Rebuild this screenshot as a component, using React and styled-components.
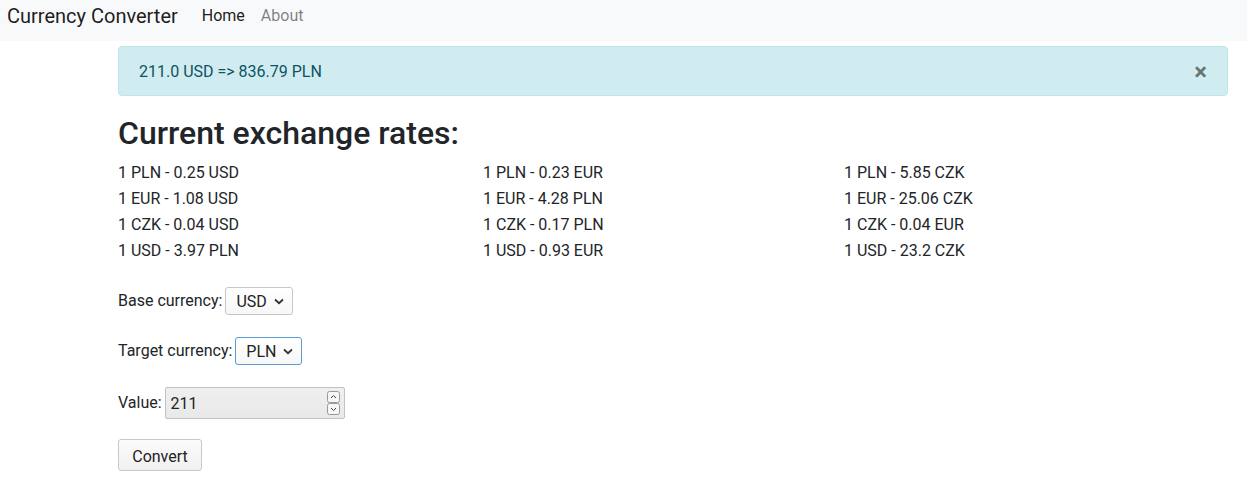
import React, { useState } from "react";
import styled, { createGlobalStyle } from "styled-components";

const GlobalStyle = createGlobalStyle`
  * { box-sizing: border-box; }
  body {
    margin: 0;
    background: #fff;
    color: #212529;
    font-family: Roboto, "Noto Sans", "Liberation Sans", sans-serif;
    font-size: 16px;
    line-height: 1.5;
  }
`;

const Navbar = styled.nav`
  height: 41px;
  background: #f8f9fa;
  display: flex;
  align-items: flex-start;
  padding: 5px 0 0 7px;
`;

const Brand = styled.a`
  font-size: 20px;
  line-height: 22px;
  color: rgba(0, 0, 0, 0.9);
  margin-right: 16px;
  text-decoration: none;
`;

const NavLink = styled.a`
  font-size: 16px;
  line-height: 22px;
  padding: 0 8px;
  text-decoration: none;
  color: ${(p) => (p.$active ? "rgba(0,0,0,0.9)" : "rgba(0,0,0,0.5)")};
`;

const Main = styled.main`
  padding: 5px 19px 0 118px;
`;

const Alert = styled.div`
  display: flex;
  align-items: center;
  justify-content: space-between;
  padding: 13px 20px 11px;
  border: 1px solid #bee5eb;
  border-radius: 4px;
  background: #d1ecf1;
  color: #0c5460;
  line-height: 24px;
`;

const Close = styled.button`
  border: 0;
  background: transparent;
  padding: 0;
  margin-right: 0;
  font-family: inherit;
  font-size: 24px;
  font-weight: 700;
  line-height: 24px;
  color: #000;
  opacity: 0.5;
  text-shadow: 0 1px 0 #fff;
  cursor: pointer;
`;

const Title = styled.h2`
  margin: 18px 0 8px;
  font-size: 32px;
  font-weight: 500;
  line-height: 1.2;
`;

const Rates = styled.div`
  display: grid;
  grid-template-columns: 365px 361px 1fr;
`;

const RateColumn = styled.div`
  display: flex;
  flex-direction: column;
`;

const Rate = styled.div`
  line-height: 26px;
`;

const Form = styled.form`
  display: flex;
  flex-direction: column;
  align-items: flex-start;
  margin-top: 23px;
`;

const Row = styled.label`
  display: flex;
  align-items: center;
  gap: 3px;
  margin-bottom: ${(p) => p.$gap}px;
`;

const SelectBox = styled.div`
  display: flex;
  align-items: center;
  gap: 7px;
  height: 28px;
  padding: 0 8px 0 10px;
  border: 1px solid ${(p) => (p.$focused ? "#5b9bd5" : "#c6c6c6")};
  border-radius: 3px;
  background: linear-gradient(#ffffff, #f7f7f7);
  color: #222;
  font-size: 16px;
  line-height: 26px;
  padding-top: 1px;
`;

const NumberBox = styled.div`
  display: flex;
  align-items: center;
  width: 180px;
  height: 32px;
  padding: 0 4px 0 5px;
  border: 1px solid #c2c2c2;
  border-radius: 2px;
  background: linear-gradient(#efefef, #e9e9e9);
`;

const NumberInput = styled.input`
  flex: 1;
  min-width: 0;
  border: 0;
  outline: 0;
  background: transparent;
  font-family: inherit;
  font-size: 16px;
  color: #222;
  padding: 1px 0 0;
  -moz-appearance: textfield;
  &::-webkit-inner-spin-button,
  &::-webkit-outer-spin-button {
    -webkit-appearance: none;
    margin: 0;
  }
`;

const Button = styled.button`
  width: 84px;
  height: 32px;
  border: 1px solid #c8c8c8;
  border-radius: 3px;
  background: linear-gradient(#fbfbfb, #f1f1f1);
  font-family: inherit;
  font-size: 16px;
  color: #222;
  padding: 2px 0 0;
`;

const Chevron = () => (
  <svg width="10" height="7" viewBox="0 0 10 7">
    <path d="M1 1.5 L5 5.2 L9 1.5" fill="none" stroke="#333" strokeWidth="1.8" />
  </svg>
);

const Spinner = () => (
  <svg width="13" height="24" viewBox="0 0 13 24">
    <rect x="0.5" y="0.5" width="12" height="11" rx="2" fill="#f6f6f6" stroke="#9a9a9a" />
    <rect x="0.5" y="12.5" width="12" height="11" rx="2" fill="#f6f6f6" stroke="#9a9a9a" />
    <path d="M4 7 L6.5 4.5 L9 7" fill="none" stroke="#444" strokeWidth="1" />
    <path d="M4 17 L6.5 19.5 L9 17" fill="none" stroke="#444" strokeWidth="1" />
  </svg>
);

const rates = [
  ["1 PLN - 0.25 USD", "1 EUR - 1.08 USD", "1 CZK - 0.04 USD", "1 USD - 3.97 PLN"],
  ["1 PLN - 0.23 EUR", "1 EUR - 4.28 PLN", "1 CZK - 0.17 PLN", "1 USD - 0.93 EUR"],
  ["1 PLN - 5.85 CZK", "1 EUR - 25.06 CZK", "1 CZK - 0.04 EUR", "1 USD - 23.2 CZK"],
];

export default function App() {
  const [value, setValue] = useState("211");
  const [showAlert, setShowAlert] = useState(true);

  return (
    <>
      <GlobalStyle />
      <Navbar>
        <Brand href="#">Currency Converter</Brand>
        <NavLink href="#" $active>Home</NavLink>
        <NavLink href="#">About</NavLink>
      </Navbar>
      <Main>
        {showAlert && (
          <Alert>
            <span>211.0 USD =&gt; 836.79 PLN</span>
            <Close type="button" onClick={() => setShowAlert(false)}>×</Close>
          </Alert>
        )}
        <Title>Current exchange rates:</Title>
        <Rates>
          {rates.map((col, i) => (
            <RateColumn key={i}>
              {col.map((r) => (
                <Rate key={r}>{r}</Rate>
              ))}
            </RateColumn>
          ))}
        </Rates>
        <Form onSubmit={(e) => e.preventDefault()}>
          <Row $gap={22}>
            Base currency:
            <SelectBox>
              USD <Chevron />
            </SelectBox>
          </Row>
          <Row $gap={22}>
            Target currency:
            <SelectBox $focused>
              PLN <Chevron />
            </SelectBox>
          </Row>
          <Row $gap={20}>
            Value:
            <NumberBox>
              <NumberInput
                type="number"
                value={value}
                onChange={(e) => setValue(e.target.value)}
              />
              <Spinner />
            </NumberBox>
          </Row>
          <Button type="submit">Convert</Button>
        </Form>
      </Main>
    </>
  );
}
